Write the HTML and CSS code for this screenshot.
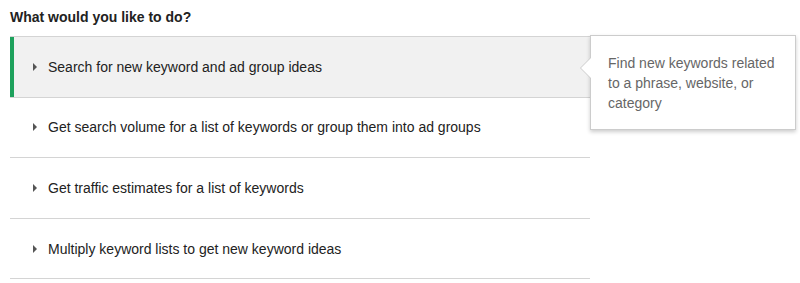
FILE: index.html
```html
<!DOCTYPE html>
<html>
<head>
<meta charset="utf-8">
<link rel="stylesheet" href="styles.css">
</head>
<body>
<div class="page">
  <h2 class="title">What would you like to do?</h2>
  <div class="wrap">
    <ul class="options">
      <li class="option active"><span class="caret"></span>Search for new keyword and ad group ideas</li>
      <li class="option"><span class="caret"></span>Get search volume for a list of keywords or group them into ad groups</li>
      <li class="option"><span class="caret"></span>Get traffic estimates for a list of keywords</li>
      <li class="option"><span class="caret"></span>Multiply keyword lists to get new keyword ideas</li>
    </ul>
    <div class="tip">Find new keywords related to a phrase, website, or category</div>
  </div>
</div>
</body>
</html>
```

FILE: styles.css
```css
html, body {
  margin: 0;
  padding: 0;
  background: #fff;
}
.page {
  padding: 9px 10px 0 10px;
  font-family: Arial, "Liberation Sans", sans-serif;
}
.title {
  margin: 0;
  font-size: 14px;
  font-weight: bold;
  line-height: 16px;
  color: #222;
  height: 27px;
}
.wrap {
  position: relative;
  width: 580px;
}
.options {
  list-style: none;
  margin: 0;
  padding: 0;
  border-top: 1px solid #d4d4d4;
}
.option {
  display: flex;
  align-items: center;
  height: 59.6px;
  border-bottom: 1px solid #d4d4d4;
  padding-left: 23px;
  font-size: 14px;
  color: #222;
  box-sizing: content-box;
}
.option.active {
  background: #f1f1f1;
  box-shadow: inset 4px 0 0 #1da15c;
}
.caret {
  width: 0;
  height: 0;
  border-left: 4px solid #555;
  border-top: 4px solid transparent;
  border-bottom: 4px solid transparent;
  margin-right: 11px;
}
.tip {
  position: absolute;
  left: 580px;
  top: -1px;
  width: 206px;
  box-sizing: border-box;
  padding: 17px 12px 16px 17px;
  background: #fff;
  border: 1px solid #ccc;
  box-shadow: 0 2px 4px rgba(0,0,0,0.2);
  font-size: 14px;
  line-height: 20px;
  color: #666;
}
.tip::before {
  content: "";
  position: absolute;
  left: -11px;
  top: 21px;
  width: 0;
  height: 0;
  border-right: 11px solid #ccc;
  border-top: 11px solid transparent;
  border-bottom: 11px solid transparent;
}
.tip::after {
  content: "";
  position: absolute;
  left: -10px;
  top: 22px;
  width: 0;
  height: 0;
  border-right: 10px solid #fff;
  border-top: 10px solid transparent;
  border-bottom: 10px solid transparent;
}
```
